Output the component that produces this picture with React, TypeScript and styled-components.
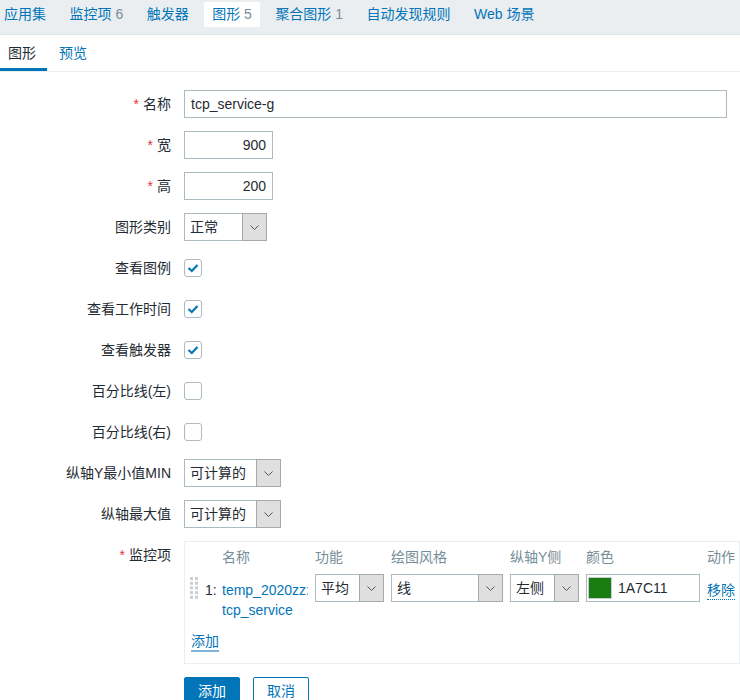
import React from 'react';
import styled, { createGlobalStyle } from 'styled-components';

const GlobalStyle = createGlobalStyle`
  html, body {
    margin: 0;
    padding: 0;
    background: #ffffff;
    overflow: hidden;
  }
  body {
    font-family: 'Liberation Sans', 'Noto Sans CJK SC', sans-serif;
    font-size: 14px;
    color: #1f2c33;
  }
`;

const BLUE = '#0275b8';
const BORDER = '#acbbc2';

const TopTabs = styled.ul`
  display: flex;
  align-items: flex-start;
  height: 35px;
  margin: 0;
  padding: 2px 0 0 0;
  box-sizing: border-box;
  list-style: none;
  background: #ebeef1;
  border-bottom: 1px solid #dfe4e7;
`;

const TopTab = styled.li<{ $active?: boolean }>`
  height: 25px;
  line-height: 25px;
  padding: 0 8px;
  margin-right: 7.5px;
  border-radius: 2px;
  color: ${BLUE};
  background: ${(p) => (p.$active ? '#ffffff' : 'transparent')};
  white-space: nowrap;
  &:first-child {
    margin-left: -4px;
  }
`;

const Count = styled.span`
  color: #768d99;
`;

const SubTabs = styled.div`
  display: flex;
  height: 37px;
  box-sizing: border-box;
  border-bottom: 1px solid #ebeef1;
`;

const SubTab = styled.div<{ $active?: boolean }>`
  padding: 3px 11px 0 8px;
  line-height: 30px;
  margin-right: 4px;
  color: ${(p) => (p.$active ? '#1f2c33' : BLUE)};
  border-bottom: 3px solid ${(p) => (p.$active ? BLUE : 'transparent')};
`;

const Form = styled.div`
  padding-top: 18px;
`;

const Row = styled.div<{ $extraTop?: number }>`
  display: grid;
  grid-template-columns: 171px 1fr;
  column-gap: 13px;
  margin-bottom: 13px;
  margin-top: ${(p) => p.$extraTop ?? 0}px;
`;

const Label = styled.div`
  text-align: right;
  line-height: 28px;
  white-space: nowrap;
`;

const Req = styled.span`
  color: #e33734;
  margin-right: 4px;
`;

const Field = styled.div`
  display: flex;
  align-items: center;
  min-height: 28px;
`;

const TextInput = styled.div<{ $width: number; $right?: boolean }>`
  width: ${(p) => p.$width}px;
  height: 28px;
  box-sizing: border-box;
  border: 1px solid ${BORDER};
  padding: 0 6px;
  line-height: 26px;
  text-align: ${(p) => (p.$right ? 'right' : 'left')};
  background: #fff;
`;

const SelectBox = styled.div<{ $width: number }>`
  display: flex;
  width: ${(p) => p.$width}px;
  height: 28px;
  box-sizing: border-box;
  border: 1px solid ${BORDER};
  background: #fff;
`;

const SelectValue = styled.div`
  flex: 1;
  padding-left: 5px;
  line-height: 26px;
  white-space: nowrap;
`;

const SelectArrow = styled.div`
  width: 25px;
  flex-shrink: 0;
  box-sizing: border-box;
  display: flex;
  align-items: center;
  justify-content: center;
  background: #dfdfdf;
  border: 1px solid #a3aaae;
  margin: -1px -1px -1px 0;
`;

const Select: React.FC<{ width: number; value: string }> = ({ width, value }) => (
  <SelectBox $width={width}>
    <SelectValue>{value}</SelectValue>
    <SelectArrow>
      <svg width="9" height="5" viewBox="0 0 9 5">
        <polyline points="0.5,0.5 4.5,4.5 8.5,0.5" fill="none" stroke="#555" strokeWidth="1" />
      </svg>
    </SelectArrow>
  </SelectBox>
);

const CheckBox = styled.div`
  width: 18px;
  height: 18px;
  box-sizing: border-box;
  border: 1px solid ${BORDER};
  border-radius: 3px;
  display: flex;
  align-items: center;
  justify-content: center;
`;

const Check: React.FC<{ checked?: boolean }> = ({ checked }) => (
  <CheckBox>
    {checked && (
      <svg width="12" height="10" viewBox="0 0 12 10">
        <polyline points="1.5,5 4.8,8 10.5,2" fill="none" stroke={BLUE} strokeWidth="2.2" />
      </svg>
    )}
  </CheckBox>
);

const ItemsBox = styled.div`
  width: 556px;
  box-sizing: border-box;
  border: 1px solid #ebeef1;
  padding: 5px 0 11px 6px;
`;

const ItemsGrid = styled.div`
  display: grid;
  grid-template-columns: 7px 10px 86px 69px 112px 69px 114px 40px;
  column-gap: 7px;
  row-gap: 7px;
  align-items: start;
`;

const Head = styled.div`
  color: #768d99;
  line-height: 20px;
  white-space: nowrap;
`;

const Handle = styled.div`
  margin-top: 3px;
  width: 7px;
  height: 22px;
  margin-left: -1px;
`;

const Num = styled.div`
  line-height: 20px;
  margin-top: 6px;
  white-space: nowrap;
`;

const NameCell = styled.div`
  margin-top: 6px;
  line-height: 20px;
  color: ${BLUE};
  overflow: hidden;
`;

const ColorField = styled.div`
  display: flex;
  align-items: center;
  height: 28px;
  box-sizing: border-box;
  border: 1px solid ${BORDER};
  background: #fff;
`;

const Swatch = styled.div<{ $color: string }>`
  width: 24px;
  height: 22px;
  box-sizing: border-box;
  margin-left: 1px;
  border: 1px solid #c5cdd1;
  background: ${(p) => p.$color};
`;

const ColorText = styled.div`
  padding-left: 6px;
  line-height: 26px;
`;

const RemoveLink = styled.span`
  display: inline-block;
  margin-top: 7px;
  line-height: 18px;
  color: ${BLUE};
  border-bottom: 1px dotted ${BLUE};
  white-space: nowrap;
`;

const AddLink = styled.span`
  display: inline-block;
  margin-top: 12px;
  line-height: 18px;
  color: ${BLUE};
  border-bottom: 2px solid #80b6d9;
`;

const Buttons = styled.div`
  display: flex;
  gap: 13px;
`;

const Button = styled.div<{ $primary?: boolean }>`
  height: 28px;
  box-sizing: border-box;
  padding: 0 13px;
  line-height: 26px;
  border-radius: 2px;
  border: 1px solid ${BLUE};
  background: ${(p) => (p.$primary ? BLUE : '#fff')};
  color: ${(p) => (p.$primary ? '#fff' : BLUE)};
`;

const DragDots = () => (
  <svg width="8" height="22" viewBox="0 0 8 22">
    {[0, 1, 2, 3, 4].map((r) =>
      [0, 5].map((c) => <rect key={`${r}-${c}`} x={c} y={r * 4.7} width="3" height="3" fill="#c9d0d4" />),
    )}
  </svg>
);

const tabs = [
  { name: '应用集' },
  { name: '监控项', count: 6 },
  { name: '触发器' },
  { name: '图形', count: 5, active: true },
  { name: '聚合图形', count: 1 },
  { name: '自动发现规则' },
  { name: 'Web 场景' },
];

const checks = [
  { label: '查看图例', checked: true },
  { label: '查看工作时间', checked: true },
  { label: '查看触发器', checked: true },
  { label: '百分比线(左)', checked: false },
  { label: '百分比线(右)', checked: false },
];

const App: React.FC = () => (
  <>
    <GlobalStyle />
    <TopTabs>
      {tabs.map((t) => (
        <TopTab key={t.name} $active={t.active}>
          {t.name}
          {t.count !== undefined && <Count> {t.count}</Count>}
        </TopTab>
      ))}
    </TopTabs>
    <SubTabs>
      <SubTab $active>图形</SubTab>
      <SubTab>预览</SubTab>
    </SubTabs>
    <Form>
      <Row>
        <Label>
          <Req>*</Req>名称
        </Label>
        <Field>
          <TextInput $width={543}>tcp_service-g</TextInput>
        </Field>
      </Row>
      <Row>
        <Label>
          <Req>*</Req>宽
        </Label>
        <Field>
          <TextInput $width={89} $right>
            900
          </TextInput>
        </Field>
      </Row>
      <Row>
        <Label>
          <Req>*</Req>高
        </Label>
        <Field>
          <TextInput $width={89} $right>
            200
          </TextInput>
        </Field>
      </Row>
      <Row>
        <Label>图形类别</Label>
        <Field>
          <Select width={83} value="正常" />
        </Field>
      </Row>
      {checks.map((c) => (
        <Row key={c.label}>
          <Label>{c.label}</Label>
          <Field>
            <Check checked={c.checked} />
          </Field>
        </Row>
      ))}
      <Row>
        <Label>纵轴Y最小值MIN</Label>
        <Field>
          <Select width={97} value="可计算的" />
        </Field>
      </Row>
      <Row>
        <Label>纵轴最大值</Label>
        <Field>
          <Select width={97} value="可计算的" />
        </Field>
      </Row>
      <Row>
        <Label>
          <Req>*</Req>监控项
        </Label>
        <ItemsBox>
          <ItemsGrid>
            <div />
            <div />
            <Head>名称</Head>
            <Head>功能</Head>
            <Head>绘图风格</Head>
            <Head>纵轴Y侧</Head>
            <Head>颜色</Head>
            <Head>动作</Head>

            <Handle>
              <DragDots />
            </Handle>
            <Num>1:</Num>
            <NameCell>temp_2020zz: tcp_service</NameCell>
            <Select width={69} value="平均" />
            <Select width={112} value="线" />
            <Select width={69} value="左侧" />
            <ColorField>
              <Swatch $color="#1A7C11" />
              <ColorText>1A7C11</ColorText>
            </ColorField>
            <div>
              <RemoveLink>移除</RemoveLink>
            </div>
          </ItemsGrid>
          <AddLink>添加</AddLink>
        </ItemsBox>
      </Row>
      <Row $extraTop={5}>
        <div />
        <Buttons>
          <Button $primary>添加</Button>
          <Button>取消</Button>
        </Buttons>
      </Row>
    </Form>
  </>
);

export default App;
